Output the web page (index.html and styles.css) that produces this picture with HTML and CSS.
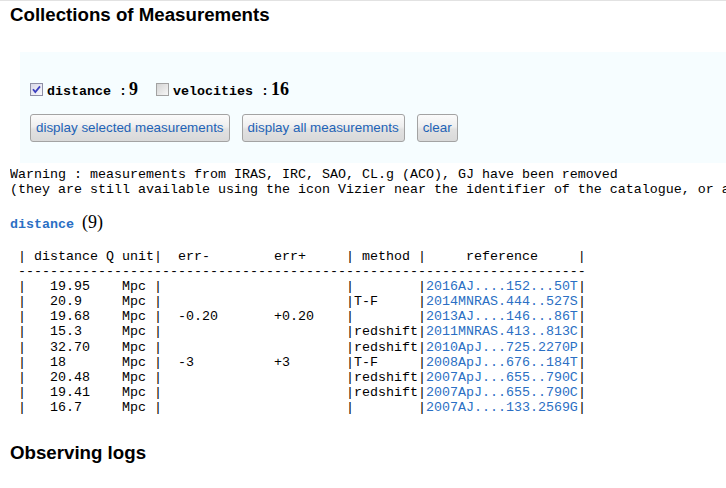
FILE: index.html
```html
<!DOCTYPE html>
<html>
<head>
<meta charset="utf-8">
<title>Collections of Measurements</title>
<link rel="stylesheet" href="styles.css">
</head>
<body>
<div class="page">
  <h1 class="title">Collections of Measurements</h1>

  <div class="panel">
    <div class="checks">
      <span class="cb"><svg width="13" height="13" viewBox="0 0 13 13"><defs><linearGradient id="g1" x1="0" y1="0" x2="1" y2="1"><stop offset="0" stop-color="#d6d6e6"/><stop offset="1" stop-color="#fbfbff"/></linearGradient></defs><rect x="0.5" y="0.5" width="12" height="12" fill="url(#g1)" stroke="#8e8fa6"/><path d="M3 6.2 L5.3 9 L10 3.4" fill="none" stroke="#3b3fbf" stroke-width="1.8"/></svg></span><span class="lab">distance :</span><b class="num">9</b>
      <span class="cb second"><svg width="13" height="13" viewBox="0 0 13 13"><defs><linearGradient id="g2" x1="0" y1="0" x2="1" y2="1"><stop offset="0" stop-color="#d2d2d2"/><stop offset="1" stop-color="#f8f8f8"/></linearGradient></defs><rect x="0.5" y="0.5" width="12" height="12" fill="url(#g2)" stroke="#a2a2a2"/></svg></span><span class="lab">velocities :</span><b class="num">16</b>
    </div>
    <div class="buttons">
      <button class="btn">display selected measurements</button>
      <button class="btn">display all measurements</button>
      <button class="btn">clear</button>
    </div>
  </div>

  <div class="clip">
<pre class="warning">Warning : measurements from IRAS, IRC, SAO, CL.g (ACO), GJ have been removed
(they are still available using the icon Vizier near the identifier of the catalogue, or at VizieR)</pre>
  </div>

  <div class="section"><span class="sec-name">distance </span><span class="sec-count">(9)</span></div>

<pre class="table"> | distance Q unit|  err-        err+     | method |     reference     |
 -----------------------------------------------------------------------
 |   19.95    Mpc |                       |        |<a class="ref">2016AJ....152...50T</a>|
 |   20.9     Mpc |                       |T-F     |<a class="ref">2014MNRAS.444..527S</a>|
 |   19.68    Mpc |  -0.20       +0.20    |        |<a class="ref">2013AJ....146...86T</a>|
 |   15.3     Mpc |                       |redshift|<a class="ref">2011MNRAS.413..813C</a>|
 |   32.70    Mpc |                       |redshift|<a class="ref">2010ApJ...725.2270P</a>|
 |   18       Mpc |  -3          +3       |T-F     |<a class="ref">2008ApJ...676..184T</a>|
 |   20.48    Mpc |                       |redshift|<a class="ref">2007ApJ...655..790C</a>|
 |   19.41    Mpc |                       |redshift|<a class="ref">2007ApJ...655..790C</a>|
 |   16.7     Mpc |                       |        |<a class="ref">2007AJ....133.2569G</a>|</pre>

  <h2 class="title sub">Observing logs</h2>
</div>
</body>
</html>
```

FILE: styles.css
```css
html, body {
  margin: 0;
  padding: 0;
  background: #ffffff;
  overflow: hidden;
}

.page {
  border-top: 1px solid #e2e2e2;
  padding: 0 0 0 10px;
  color: #000;
  width: 716px;
  overflow: hidden;
}

.title {
  margin: 0;
  padding-top: 2px;
  font-family: "Liberation Sans", Arial, sans-serif;
  font-weight: bold;
  font-size: 18.7px;
  line-height: 24px;
  height: 24px;
}

.panel {
  margin: 25px 0 0 10px;
  background: #f6fdff;
  padding: 26px 0 21px 10px;
  height: 64px;
}

.checks {
  height: 24px;
  line-height: 22px;
  font-family: "Liberation Mono", "Courier New", monospace;
  font-size: 13.33px;
  font-weight: bold;
  white-space: nowrap;
}

.cb svg {
  display: inline-block;
  vertical-align: -1px;
  margin-right: 4px;
}

.cb.second {
  margin-left: 10px;
}

.lab {
  font-weight: bold;
}

.num {
  font-family: "Liberation Serif", "Times New Roman", serif;
  font-size: 18px;
  font-weight: bold;
  margin-left: 2px;
}

.buttons {
  display: flex;
  gap: 12px;
  margin-top: 12px;
}

.btn {
  height: 28px;
  padding: 0 5px;
  border: 1px solid #a3a3a3;
  border-radius: 3px;
  background: linear-gradient(#fbfbfb 0%, #eeeeee 45%, #e1e1e1 55%, #d9d9d9 100%);
  font-family: "Liberation Sans", Tahoma, Arial, sans-serif;
  font-size: 13.4px;
  color: #1e63b6;
  line-height: 26px;
  cursor: pointer;
}

.clip {
  overflow: hidden;
  width: 716px;
}

pre {
  margin: 0;
  font-family: "Liberation Mono", "Courier New", monospace;
  font-size: 13.33px;
  line-height: 15.1px;
  white-space: pre;
}

.warning {
  margin-top: 4px;
}

.section {
  margin-top: 14.6px;
  height: 22px;
  line-height: 20px;
  white-space: nowrap;
}

.sec-name {
  font-family: "Liberation Mono", "Courier New", monospace;
  font-size: 13.33px;
  font-weight: bold;
  color: #2a6fc4;
}

.sec-count {
  font-family: "Liberation Serif", "Times New Roman", serif;
  font-size: 18px;
}

.table {
  margin-top: 15.2px;
}

.ref {
  color: #2a6fc4;
  text-decoration: none;
}

.sub {
  margin-top: 24px;
}
```
